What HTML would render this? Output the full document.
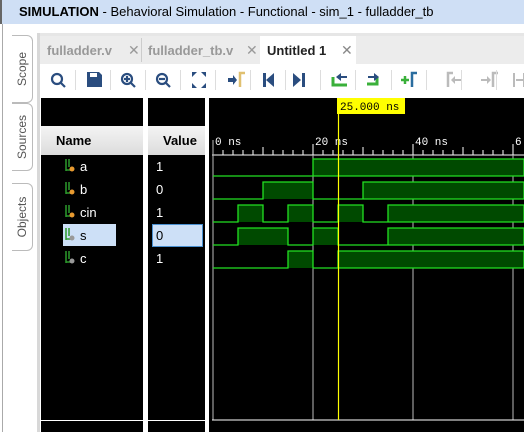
<!DOCTYPE html>
<html><head><style>
body{margin:0;width:524px;height:432px;overflow:hidden;background:#fff;font-family:"Liberation Sans",sans-serif;position:relative}
.a{position:absolute}
.vt{position:absolute;left:12px;width:20px;border:1px solid #bbb;border-left:none;border-radius:0 6px 6px 0;background:#fff}
.vt span{position:absolute;left:50%;top:50%;transform:translate(-50%,-50%) rotate(-90deg);font-size:12px;color:#555;white-space:nowrap}
.tab{position:absolute;top:37px;height:27px;font-size:13px;font-weight:bold;color:#999;line-height:27px}
.nm{position:absolute;left:80px;font-size:13px;color:#fff}
.vl{position:absolute;left:156px;font-size:13px;color:#fff}
</style></head><body>
<div class="a" style="left:0;top:0;width:524px;height:24px;background:#cfdff5"></div>
<div class="a" style="left:0;top:0;width:2px;height:24px;background:#666"></div>
<div class="a" style="left:19px;top:4px;font-size:13px;color:#000;white-space:nowrap"><b>SIMULATION</b> - Behavioral Simulation - Functional - sim_1 - fulladder_tb</div>
<div class="a" style="left:2px;top:24px;width:1px;height:408px;background:#aaa"></div>
<div class="vt" style="top:35px;height:66px"><span>Scope</span></div>
<div class="vt" style="top:103px;height:66px"><span>Sources</span></div>
<div class="vt" style="top:183px;height:66px"><span>Objects</span></div>
<div class="a" style="left:37px;top:33px;width:487px;height:399px;background:#e6e6e6"></div>
<div class="a" style="left:37px;top:33px;width:3px;height:399px;background:#d8d8d8"></div>
<div class="a" style="left:40px;top:36px;width:484px;height:28px;background:#ececec"></div>
<div class="tab" style="left:47px">fulladder.v</div><div class="a" style="left:128px;top:42px;color:#999;font-size:14px">✕</div>
<div class="a" style="left:141px;top:38px;width:1px;height:24px;background:#ccc"></div>
<div class="tab" style="left:148px">fulladder_tb.v</div><div class="a" style="left:246px;top:42px;color:#999;font-size:14px">✕</div>
<div class="a" style="left:260px;top:36px;width:96px;height:28px;background:#fff"></div>
<div class="tab" style="left:267px;color:#222">Untitled 1</div><div class="a" style="left:341px;top:42px;color:#888;font-size:14px">✕</div>
<div class="a" style="left:40px;top:64px;width:484px;height:34px;background:#fff"></div>
<svg class="a" style="left:40px;top:64px" width="484" height="34">
<g fill="none" stroke="#2a4d7f" stroke-width="2.2">
<circle cx="17" cy="15" r="5"/><line x1="21" y1="19" x2="25" y2="23"/>
<circle cx="87" cy="15" r="5"/><line x1="91" y1="19" x2="95" y2="23"/><line x1="84" y1="15" x2="90" y2="15"/><line x1="87" y1="12" x2="87" y2="18"/>
<circle cx="122" cy="15" r="5"/><line x1="126" y1="19" x2="130" y2="23"/><line x1="119" y1="15" x2="125" y2="15"/>
</g>
<path d="M47 8h12l3 3v12h-15z" fill="#2a4d7f"/><rect x="50" y="9" width="7" height="4" fill="#fff"/>
<g fill="#2a4d7f"><path d="M152 8h5l-5 5zM166 8h-5l5 5zM152 24h5l-5-5zM166 24h-5l5-5z"/>
<path d="M188 14h5v-3l4 5-4 5v-3h-5z"/><rect x="223" y="9" width="3" height="14"/><path d="M234 9v14l-8-7z"/>
<rect x="262" y="9" width="3" height="14"/><path d="M253 9v14l8-7z"/></g>
<path d="M200 23v-14h5" stroke="#e0c070" stroke-width="2.5" fill="none"/>
<path d="M293 13v8h14" stroke="#3ab03a" stroke-width="3" fill="none"/><path d="M307 14h-6v3l-5-4 5-4v3h6z" fill="#2a4d7f"/>
<path d="M327 20h10v-7" stroke="#3ab03a" stroke-width="3" fill="none"/><path d="M328 12h6v-3l5 4-5 4v-3h-6z" fill="#2a4d7f"/>
<path d="M361 16h8M365 12v8" stroke="#3ab03a" stroke-width="2.5"/><path d="M372 23v-14h5" stroke="#2a6d9f" stroke-width="2.5" fill="none"/>
<path d="M408 23v-14h5" stroke="#bbb" stroke-width="2.5" fill="none"/><path d="M411 16l4-4v3h6v2h-6v3z" fill="#bbb"/>
<path d="M453 23v-14h5" stroke="#bbb" stroke-width="2.5" fill="none"/><path d="M441 15h6v-3l4 4-4 4v-3h-6z" fill="#bbb"/>
<path d="M474 9v14M484 9v14M476 16h8" stroke="#bbb" stroke-width="2"/>
<g fill="#ddd"><rect x="35" y="6" width="1" height="20"/><rect x="70" y="6" width="1" height="20"/><rect x="105" y="6" width="1" height="20"/><rect x="140" y="6" width="1" height="20"/><rect x="175" y="6" width="1" height="20"/><rect x="210" y="6" width="1" height="20"/><rect x="245" y="6" width="1" height="20"/><rect x="280" y="6" width="1" height="20"/><rect x="315" y="6" width="1" height="20"/><rect x="351" y="6" width="1" height="20"/><rect x="386" y="6" width="1" height="20"/><rect x="421" y="6" width="1" height="20"/><rect x="456" y="6" width="1" height="20"/></g>
</svg>
<div class="a" style="left:40px;top:98px;width:484px;height:334px;background:#fff"></div>
<div class="a" style="left:41px;top:98px;width:102px;height:334px;background:#000"></div>
<div class="a" style="left:148px;top:98px;width:57px;height:334px;background:#000"></div>
<div class="a" style="left:209px;top:98px;width:315px;height:334px;background:#000"></div>
<div class="a" style="left:41px;top:126px;width:102px;height:29px;background:linear-gradient(#f4f4f4,#dcdcdc)"></div>
<div class="a" style="left:148px;top:126px;width:57px;height:29px;background:linear-gradient(#f4f4f4,#dcdcdc)"></div>
<div class="a" style="left:56px;top:133px;font-size:13px;font-weight:bold">Name</div>
<div class="a" style="left:163px;top:133px;font-size:13px;font-weight:bold">Value</div>
<div class="a" style="left:63px;top:224px;width:53px;height:22px;background:#cde0f7"></div>
<div class="a" style="left:152px;top:224px;width:49px;height:21px;background:#cde0f7;border:1px solid #4a90d0"></div>
<svg class="a" style="left:64px;top:158px" width="16" height="110">
<g stroke="#2c9a2c" stroke-width="1.5" fill="none">
<path d="M2 1v12M2 12h5M5 1v8"/><path d="M2 24v12M2 35h5M5 24v8"/><path d="M2 47v12M2 58h5M5 47v8"/><path d="M2 70v12M2 81h5M5 70v8"/><path d="M2 93v12M2 104h5M5 93v8"/></g>
<circle cx="8" cy="11" r="2.5" fill="#e89a30"/><circle cx="8" cy="34" r="2.5" fill="#e89a30"/><circle cx="8" cy="57" r="2.5" fill="#e89a30"/><circle cx="8" cy="80" r="2.5" fill="#999"/><circle cx="8" cy="103" r="2.5" fill="#999"/>
</svg>
<div class="nm" style="top:159px">a</div><div class="nm" style="top:182px">b</div><div class="nm" style="top:205px">cin</div><div class="nm" style="top:228px;color:#000">s</div><div class="nm" style="top:251px">c</div>
<div class="vl" style="top:159px">1</div><div class="vl" style="top:182px">0</div><div class="vl" style="top:205px">1</div><div class="vl" style="top:228px;color:#000">0</div><div class="vl" style="top:251px">1</div>
<div class="a" style="left:41px;top:420px;width:102px;height:1px;background:#fff"></div>
<div class="a" style="left:148px;top:420px;width:57px;height:1px;background:#fff"></div>
<svg class="a" style="left:0;top:0" width="524" height="432">
<g fill="#fff" font-family="Liberation Mono,monospace" font-size="11"><text x="215" y="145">0 ns</text><text x="315" y="145">20 ns</text><text x="415" y="145">40 ns</text><text x="515" y="145">6</text></g>
<line x1="212" y1="155" x2="524" y2="155" stroke="#fff"/>
<g stroke="#fff"><path d="M213 144v11M313 144v11M413 144v11M513 144v11M263 147v8M363 147v8M463 147v8M223 150v5M233 150v5M243 150v5M253 150v5M273 150v5M283 150v5M293 150v5M303 150v5M323 150v5M333 150v5M343 150v5M353 150v5M373 150v5M383 150v5M393 150v5M403 150v5M423 150v5M433 150v5M443 150v5M453 150v5M473 150v5M483 150v5M493 150v5M503 150v5"/></g>
<g stroke="#bbb"><path d="M213 140v280M313 155v265M413 155v265M513 155v265"/><path d="M212 420h312" stroke="#fff"/></g>
<g fill="#004a00" stroke="#22e022" stroke-width="1.3">
<path d="M213 176H313V159H524V176H313"/>
<path d="M213 199H263V182H313V199H363V182H524V199H363"/>
<path d="M213 222H238V205H263V222H288V205H313V222H338V205H363V222H388V205H524V222H388"/>
<path d="M213 245H238V228H288V245H313V228H338V245H388V228H524V245H388"/>
<path d="M213 268H288V251H313V268H338V251H524V268H338"/>
</g>
<line x1="338.5" y1="112" x2="338.5" y2="420" stroke="#ff0" stroke-width="1.2"/>
<rect x="337" y="98" width="68" height="16" fill="#ff0"/>
<text x="340" y="110" font-family="Liberation Mono,monospace" font-size="11" fill="#000">25.000 ns</text>
</svg>
</body></html>
